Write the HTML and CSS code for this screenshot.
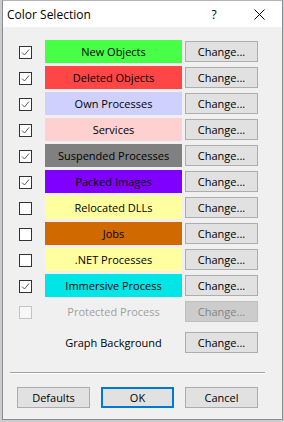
FILE: index.html
```html
<!DOCTYPE html>
<html>
  <head>
    <title>Color Selection</title>
    <link rel="stylesheet" href="styles.css">
  </head>
  <body>
    <div class="window">
      <div class="titlebar">
        <span class="title">Color Selection</span>
        <span class="help">?</span>
        <span class="close">
          <svg width="11" height="11" viewBox="0 0 11 11"><path d="M0.5 0.5 L10.5 10.5 M10.5 0.5 L0.5 10.5" stroke="#000" stroke-width="1" fill="none"/></svg>
        </span>
      </div>
      <div class="rows">
        <div class="row">
          <span class="check"><svg width="11" height="11" viewBox="0 0 11 11"><polyline points="2,5.5 4.5,8 9,2.5" stroke="#555" stroke-width="1" fill="none"/></svg></span>
          <div class="swatch c-new">New Objects</div>
          <button class="btn">Change...</button>
        </div>
        <div class="row">
          <span class="check"><svg width="11" height="11" viewBox="0 0 11 11"><polyline points="2,5.5 4.5,8 9,2.5" stroke="#555" stroke-width="1" fill="none"/></svg></span>
          <div class="swatch c-deleted">Deleted Objects</div>
          <button class="btn">Change...</button>
        </div>
        <div class="row">
          <span class="check"><svg width="11" height="11" viewBox="0 0 11 11"><polyline points="2,5.5 4.5,8 9,2.5" stroke="#555" stroke-width="1" fill="none"/></svg></span>
          <div class="swatch c-own">Own Processes</div>
          <button class="btn">Change...</button>
        </div>
        <div class="row">
          <span class="check"><svg width="11" height="11" viewBox="0 0 11 11"><polyline points="2,5.5 4.5,8 9,2.5" stroke="#555" stroke-width="1" fill="none"/></svg></span>
          <div class="swatch c-services">Services</div>
          <button class="btn">Change...</button>
        </div>
        <div class="row">
          <span class="check"><svg width="11" height="11" viewBox="0 0 11 11"><polyline points="2,5.5 4.5,8 9,2.5" stroke="#555" stroke-width="1" fill="none"/></svg></span>
          <div class="swatch c-suspended">Suspended Processes</div>
          <button class="btn">Change...</button>
        </div>
        <div class="row">
          <span class="check"><svg width="11" height="11" viewBox="0 0 11 11"><polyline points="2,5.5 4.5,8 9,2.5" stroke="#555" stroke-width="1" fill="none"/></svg></span>
          <div class="swatch c-packed">Packed Images</div>
          <button class="btn">Change...</button>
        </div>
        <div class="row">
          <span class="check"></span>
          <div class="swatch c-relocated">Relocated DLLs</div>
          <button class="btn">Change...</button>
        </div>
        <div class="row">
          <span class="check"></span>
          <div class="swatch c-jobs">Jobs</div>
          <button class="btn">Change...</button>
        </div>
        <div class="row">
          <span class="check"></span>
          <div class="swatch c-net">.NET Processes</div>
          <button class="btn">Change...</button>
        </div>
        <div class="row">
          <span class="check"><svg width="11" height="11" viewBox="0 0 11 11"><polyline points="2,5.5 4.5,8 9,2.5" stroke="#555" stroke-width="1" fill="none"/></svg></span>
          <div class="swatch c-immersive">Immersive Process</div>
          <button class="btn">Change...</button>
        </div>
        <div class="row">
          <span class="check disabled"></span>
          <div class="swatch c-protected">Protected Process</div>
          <button class="btn" disabled>Change...</button>
        </div>
        <div class="row graph">
          <span class="check blank"></span>
          <div class="swatch">Graph Background</div>
          <button class="btn">Change...</button>
        </div>
      </div>
      <div class="sep"></div>
      <div class="actions">
        <button class="btn">Defaults</button>
        <button class="btn default">OK</button>
        <button class="btn">Cancel</button>
      </div>
    </div>
  </body>
</html>
```
FILE: styles.css
```css
body {
  margin: 0;
  background: #c9ccd1;
  font-family: "Open Sans", "Noto Sans", sans-serif;
  font-size: 11px;
  color: #000;
}
.window {
  margin-left: 2px;
  width: 281px;
  height: 420px;
  box-sizing: border-box;
  border: 1px solid #8c8c8c;
  border-top-color: #b4b4b4;
  background: #f0f0f0;
}
.titlebar {
  height: 26px;
  background: #fff;
  display: flex;
  align-items: center;
  padding-left: 4px;
}
.title {
  flex: 1;
  font-size: 12px;
}
.help {
  width: 44px;
  font-size: 12px;
  text-align: center;
}
.close {
  width: 46px;
  display: flex;
  justify-content: center;
}
.rows {
  display: flex;
  flex-direction: column;
  gap: 3px;
  padding: 13px 0 0 16px;
}
.row {
  display: flex;
  align-items: center;
  height: 23px;
}
.row.graph {
  margin-top: 5px;
}
.check {
  width: 13px;
  height: 13px;
  box-sizing: border-box;
  border: 1px solid #333;
  background: #fff;
  margin-right: 13px;
  margin-top: 2px;
  display: flex;
}
.check.disabled {
  border-color: #c4c4c4;
  background: #f7f7f7;
}
.check.blank {
  visibility: hidden;
}
.swatch {
  width: 137px;
  height: 23px;
  margin-right: 3px;
  display: flex;
  align-items: center;
  justify-content: center;
}
.c-new { background: #46ff46; }
.c-deleted { background: #ff4646; }
.c-own { background: #d0d0ff; }
.c-services { background: #ffd0d0; }
.c-suspended { background: #808080; }
.c-packed { background: #8000ff; }
.c-relocated { background: #ffffa0; }
.c-jobs { background: #d06a00; }
.c-net { background: #ffffa0; }
.c-immersive { background: #00e6e6; }
.c-protected { color: #a0a0a0; }
.btn {
  width: 73px;
  height: 21px;
  padding: 0;
  box-sizing: border-box;
  border: 1px solid #adadad;
  background: #e1e1e1;
  font-family: inherit;
  font-size: 11px;
  color: #000;
}
.btn:disabled {
  background: #cccccc;
  border-color: #bfbfbf;
  color: #838383;
}
.btn.default {
  border: 2px solid #0078d7;
}
.sep {
  margin: 18px 0 0 7px;
  width: 255px;
  height: 1px;
  background: #a0a0a0;
  border-bottom: 1px solid #fff;
}
.actions {
  display: flex;
  gap: 11px;
  padding: 13px 0 0 14px;
}
```
